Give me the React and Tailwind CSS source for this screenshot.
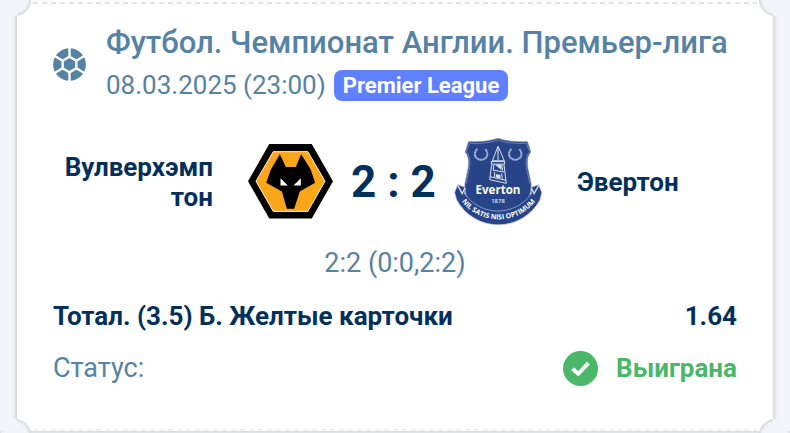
const match = {
  tournament: "Футбол. Чемпионат Англии. Премьер-лига",
  date: "08.03.2025 (23:00)",
  league: "Premier League",
  home: "Вулверхэмптон",
  away: "Эвертон",
  score: "2 : 2",
  details: "2:2 (0:0,2:2)",
};

const bet = {
  name: "Тотал. (3.5) Б. Желтые карточки",
  odds: "1.64",
  status: "Выиграна",
};

function BallIcon() {
  return (
    <svg viewBox="0 0 99 99" className="size-[33px] shrink-0" aria-hidden="true">
      <circle cx="49.5" cy="49.5" r="49" fill="#5682a3" />
      <g fill="none" stroke="#fff" strokeWidth="7">
        <path d="M49.5 26L70 38V61L49.5 73L29 61V38Z" />
        <path d="M49.5 26V0M49.5 73V99M70 38L95 23M70 61L95 76M29 61L4 76M29 38L4 23" />
      </g>
    </svg>
  );
}

function WolvesLogo() {
  return (
    <svg viewBox="28 43 256 224" className="w-[85px] shrink-0" role="img" aria-label="Вулверхэмптон">
      <path d="M92 43H220L284 155L220 267H92L28 155Z" fill="#000" />
      <path
        d="M104 66H208L260 155L208 246H104L52 155Z"
        fill="#faa61a"
        stroke="#fff3d9"
        strokeWidth="3"
      />
      <path
        d="M124 74L142 112H172L188 74L217 120L230 160L184 186L167 238H145L130 186L83 160L97 120Z"
        fill="#000"
      />
      <path d="M126 146L148 168H126ZM187 146V168H165Z" fill="#fff" />
    </svg>
  );
}

function EvertonLogo() {
  return (
    <svg viewBox="28 22 266 264" className="w-[88px] shrink-0" role="img" aria-label="Эвертон">
      <defs>
        <path id="motto" d="M47 208A141 141 0 0 0 278 208" />
      </defs>
      {/* shield */}
      <path
        d="M72 33Q122 36 161 23Q200 36 250 33L260 64Q246 80 251 112L261 160Q265 244 161 254Q57 244 61 160L71 112Q76 80 62 64Z"
        fill="#274488"
        stroke="#7d90bb"
        strokeWidth="2"
      />
      <path
        d="M65 160L75 112Q80 80 66 63L75 38Q123 41 161 28Q199 41 247 38L256 63Q242 80 247 113L257 160"
        fill="none"
        stroke="#8fa0c7"
        strokeWidth="2"
      />
      {/* laurels */}
      <g fill="none" stroke="#b4c1df" strokeWidth="6" strokeDasharray="4 1">
        <path d="M98 55Q87 68 94 80Q110 96 126 80Q133 68 122 55" />
        <path d="M201 55Q190 68 197 80Q213 96 229 80Q236 68 225 55" />
      </g>
      {/* tower */}
      <g fill="none" stroke="#dce3f2" strokeWidth="3">
        <path d="M161 47L144 91H180Z" />
        <path d="M161 52V89M141 93H181V101H141Z" />
        <path d="M142 102L136 148L186 159L179 102M137 139L185 150M145 119L180 125" />
        <path d="M148 103L147 118M173 103L175 121M151 125L150 140M172 129L174 145" />
        <path d="M153 103L171 118V103ZM155 132V141L168 144V134Z" fill="#dce3f2" strokeWidth="1" />
      </g>
      <text
        x="161"
        y="192"
        textAnchor="middle"
        fill="#fff"
        className="font-['Open_Sans',sans-serif] text-[35px] font-bold"
      >
        Everton
      </text>
      <text
        x="161"
        y="220"
        textAnchor="middle"
        fill="#dce3f2"
        className="font-['Open_Sans',sans-serif] text-[18px] font-semibold"
      >
        1878
      </text>
      {/* ribbon */}
      <path
        d="M30 187L39 163L61 171L60 190A123 123 0 0 0 262 190L262 171L284 163L293 187L288 209A143 143 0 0 1 36 209Z"
        fill="#274488"
        stroke="#b4c1df"
        strokeWidth="2"
      />
      <path d="M39 165L53 190L61 173M284 165L270 190L262 173" fill="none" stroke="#dce3f2" strokeWidth="4" />
      <text fill="#fff" className="font-['Open_Sans',sans-serif] text-[21px] font-bold">
        <textPath href="#motto" startOffset="50%" textAnchor="middle">
          NIL SATIS NISI OPTIMUM
        </textPath>
      </text>
    </svg>
  );
}

function CheckIcon() {
  return (
    <svg viewBox="0 0 106 106" className="size-[35px] shrink-0" aria-hidden="true">
      <circle cx="53" cy="53" r="53" fill="#4bb768" />
      <path d="M29 54L46 69L77 37" fill="none" stroke="#fff" strokeWidth="12" />
    </svg>
  );
}

function Perforation({ className }) {
  return (
    <div
      className={`absolute inset-x-4 h-[2px] bg-[repeating-linear-gradient(90deg,#e1e4e8_0px,#e1e4e8_5px,transparent_5px,transparent_9px)] ${className}`}
    />
  );
}

function Notch({ className }) {
  return (
    <div
      className={`absolute size-8 rounded-full bg-[#f4f5fa] shadow-[inset_0_0_4px_#00000040] ${className}`}
    />
  );
}

export default function App() {
  return (
    <main className="min-h-screen overflow-hidden bg-[#f4f5fa] px-[17px] font-[Roboto,sans-serif] text-[26px] text-[#5682a3]">
      <article className="relative bg-white px-9 pt-[22px] pb-[43px] shadow-[0_0_5px_#00000040]">
        <Perforation className="top-[2px]" />
        <Perforation className="bottom-0 opacity-60" />
        <Notch className="-top-4 -left-[18px]" />
        <Notch className="-top-4 -right-[18px]" />
        <Notch className="-bottom-5 -left-[18px]" />
        <Notch className="-bottom-5 -right-[18px]" />
        {/* hides the outer half of the notches */}
        <div className="absolute top-0 right-full h-4 w-5 bg-[#f4f5fa]" />
        <div className="absolute top-0 left-full h-4 w-5 bg-[#f4f5fa]" />
        <div className="absolute right-full bottom-0 h-3 w-5 bg-[#f4f5fa]" />
        <div className="absolute bottom-0 left-full h-3 w-5 bg-[#f4f5fa]" />

        <header className="flex items-center gap-5">
          <BallIcon />
          <div>
            <h1 className="text-[31px] leading-[42px] font-medium">{match.tournament}</h1>
            <div className="flex items-center gap-2 leading-[42px]">
              <time dateTime="2025-03-08T23:00">{match.date}</time>
              <span className="rounded-lg bg-[#5f80ff] px-[9px] text-[22px] leading-[31px] font-bold text-white">
                {match.league}
              </span>
            </div>
          </div>
        </header>

        <section className="mt-[32px] grid grid-cols-[160px_1fr_160px] items-center font-bold text-[#03305a]">
          <div className="text-right leading-[30px] break-words">{match.home}</div>
          <div className="flex items-center justify-center gap-[18px]">
            <WolvesLogo />
            <div className="text-[44px] whitespace-nowrap">{match.score}</div>
            <EvertonLogo />
          </div>
          <div className="leading-[30px] break-words">{match.away}</div>
        </section>

        <p className="mt-5 text-center text-[27px] leading-[36px]">{match.details}</p>

        <dl className="mt-[15px]">
          <div className="flex items-center justify-between leading-[40px] font-bold text-[#03305a]">
            <dt>{bet.name}</dt>
            <dd>{bet.odds}</dd>
          </div>
          <div className="mt-3 flex items-center justify-between leading-[40px]">
            <dt className="text-[27px]">Статус:</dt>
            <dd className="flex items-center gap-[18px] font-bold text-[#4bb768]">
              <CheckIcon />
              {bet.status}
            </dd>
          </div>
        </dl>
      </article>
    </main>
  );
}
